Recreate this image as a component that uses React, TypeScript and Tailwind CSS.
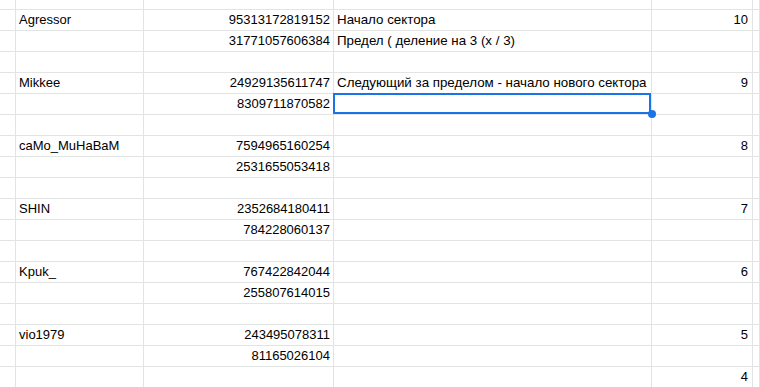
import React from "react";

type Row = { a?: string; b?: string; c?: string; e?: string; sel?: boolean };

const rows: Row[] = [
  { a: "Agressor", b: "95313172819152", c: "Начало сектора", e: "10" },
  { b: "31771057606384", c: "Предел ( деление на 3 (x / 3)" },
  {},
  { a: "Mikkee", b: "24929135611747", c: "Следующий за пределом - начало нового сектора", e: "9" },
  { b: "8309711870582", sel: true },
  {},
  { a: "caMo_MuHaBaM", b: "7594965160254", e: "8" },
  { b: "2531655053418" },
  {},
  { a: "SHIN", b: "2352684180411", e: "7" },
  { b: "784228060137" },
  {},
  { a: "Kpuk_", b: "767422842044", e: "6" },
  { b: "255807614015" },
  {},
  { a: "vio1979", b: "243495078311", e: "5" },
  { b: "81165026104" },
  { e: "4" },
];

const cell = "border-r border-b border-[#e2e3e3] h-full overflow-visible whitespace-nowrap";

function GridRow({ r, first }: { r: Row; first?: boolean }) {
  return (
    <div className={`flex ${first ? "h-[10px]" : "h-[21px]"} leading-[20px]`}>
      <div className={`${cell} w-[16px] shrink-0`} />
      <div className={`${cell} w-[128px] shrink-0 pl-[3px]`}>{r.a}</div>
      <div className={`${cell} w-[190px] shrink-0 pr-[3px] text-right`}>{r.b}</div>
      <div className={`${cell} w-[318px] shrink-0 pl-[3px] relative text-[13.33px]`}>
        {r.c}
        {r.sel && (
          <div className="absolute z-10 left-[-1px] top-[-1px] w-[318px] h-[21px] border-2 border-[#1a73e8]">
            <div className="absolute right-[-7px] bottom-[-6px] w-[8px] h-[8px] rounded-full bg-[#1a73e8]" />
          </div>
        )}
      </div>
      <div className={`${cell} w-[101px] shrink-0 pr-[4px] text-right`}>{r.e}</div>
      <div className={`${cell} flex-1`} />
    </div>
  );
}

export default function App() {
  return (
    <div
      className="w-[760px] h-[387px] overflow-hidden bg-white text-black text-[13px]"
      style={{ fontFamily: '"Liberation Sans", Arial, sans-serif' }}
    >
      <GridRow r={{}} first />
      {rows.map((r, i) => (
        <GridRow key={i} r={r} />
      ))}
    </div>
  );
}
